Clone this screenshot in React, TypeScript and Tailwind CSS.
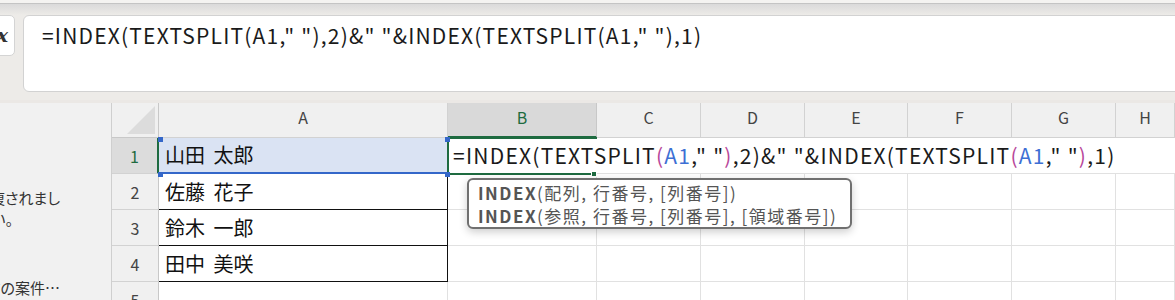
import React from "react";

const font = { fontFamily: '"Noto Sans CJK JP", "Noto Sans", sans-serif' };

const cols = ["A", "B", "C", "D", "E", "F", "G", "H"];
const names = ["山田 太郎", "佐藤 花子", "鈴木 一郎", "田中 美咲", ""];

function Formula({ colored }: { colored?: boolean }) {
  const ref = colored ? "text-[#3d6fd4]" : "";
  const par = colored ? "text-[#b8479a]" : "";
  const part = (n: string) => (
    <>
      INDEX(TEXTSPLIT<span className={par}>(</span>
      <span className={ref}>A1</span>," "<span className={par}>)</span>,{n})
    </>
  );
  return (
    <>
      ={part("2")}&amp;" "&amp;{part("1")}
    </>
  );
}

export default function App() {
  return (
    <div
      className="w-[1175px] h-[300px] overflow-hidden bg-[#edebe8] text-[#222]"
      style={font}
    >
      {/* formula bar */}
      <div className="h-[100px] flex flex-col">
        <div className="h-[3px] bg-[#f4f3f1]" />
        <div className="h-[1px] bg-[#c4c4c4]" />
        <div className="h-[11px] bg-gradient-to-b from-[#dadada] to-[#edebe8]" />
        <div className="flex gap-[8px]">
          <div className="-ml-[30px] w-[45px] h-[41px] bg-white border border-[#d4d4d4] rounded-[5px] flex items-center justify-end pr-[6px]">
            <span className="italic font-bold text-[19px] text-[#333]" style={{ fontFamily: '"DejaVu Serif", serif' }}>
              x
            </span>
          </div>
          <div className="flex-1 -mr-[20px] h-[77px] bg-white border border-[#d2d2d2] rounded-[6px] pl-[18px] pt-[5px]">
            <div className="text-[21px] leading-[28px] tracking-[1.2px] whitespace-nowrap text-[#1a1a1a]">
              <Formula />
            </div>
          </div>
        </div>
      </div>

      <div className="h-[3px] bg-[#ebe8e5]" />

      {/* sheet area */}
      <div className="flex h-[197px]">
        <div
          className="w-[111px] bg-[#f1f1f1] flex flex-col text-[15px] leading-[21px] text-[#333] pr-[51px] pt-[84px] overflow-hidden"
          style={{ fontFeatureSettings: '"palt"' }}
        >
          <div className="flex justify-end whitespace-nowrap">修復されまし</div>
          <div className="flex justify-end whitespace-nowrap mr-[47px]">ください。</div>
          <div className="flex justify-end whitespace-nowrap mt-[48px]">前の案件…</div>
        </div>

        <div className="relative flex-1 border-l border-[#cfcfcf] bg-white overflow-hidden">
          <div className="grid grid-cols-[47px_289px_149px_104px_104px_103px_104px_104px_1fr] grid-rows-[35px_36px_36px_36px_36px_36px]">
            {/* header row */}
            <div className="bg-[#f0f0f0] border-b border-r border-[#c8c8c8] relative">
              <div
                className="absolute right-[3px] bottom-[3px] w-[28px] h-[28px] bg-[#dcdcdc]"
                style={{ clipPath: "polygon(100% 0, 100% 100%, 0 100%)" }}
              />
            </div>
            {cols.map((c) => (
              <div
                key={c}
                className={
                  c === "B"
                    ? "bg-[#d9d9d9] border-b-[2px] border-b-[#1e6b40] border-r border-r-[#c8c8c8] flex justify-center pt-[2px] text-[16px] leading-[24px] text-[#1e6b40]"
                    : "bg-[#f0f0f0] border-b border-r border-[#d2d2d2] flex justify-center pt-[2px] text-[16px] leading-[24px] text-[#444]"
                }
              >
                {c}
              </div>
            ))}

            {names.map((n, i) => {
              const r = i + 1;
              const black = i < 4;
              return (
                <React.Fragment key={r}>
                  <div
                    className={
                      r === 1
                        ? "bg-[#dcdcdc] border-r-[2px] border-r-[#1e6b40] border-b border-b-[#d2d2d2] flex items-center justify-center text-[16px] text-[#1e6b40]"
                        : "bg-[#f0f0f0] border-r border-[#c8c8c8] border-b border-b-[#d2d2d2] flex items-center justify-center text-[16px] text-[#444]"
                    }
                  >
                    {r}
                  </div>
                  <div
                    className={
                      (r === 1
                        ? "bg-[#dae3f3] border-b-[2px] border-b-[#3467c9] border-r border-r-[#222]"
                        : black
                        ? "border-b border-r border-[#111]"
                        : "border-r border-b border-[#e1e1e1]") +
                      " flex items-center pl-[6px] text-[20px] [word-spacing:4px] whitespace-nowrap text-[#111]"
                    }
                  >
                    {n}
                  </div>
                  {cols.slice(1).map((c) => (
                    <div
                      key={c}
                      className={
                        r === 1
                          ? "border-b border-[#e1e1e1] relative"
                          : "border-r border-b border-[#e1e1e1]"
                      }
                    >
                      {r === 1 && c === "B" && (
                        <div className="absolute left-[5px] top-0 h-full flex items-center text-[21px] tracking-[1.24px] whitespace-nowrap text-[#1a1a1a] z-10">
                          <Formula colored />
                        </div>
                      )}
                    </div>
                  ))}
                </React.Fragment>
              );
            })}
          </div>

          {/* B1 edit border */}
          <div className="absolute left-[335px] top-[34px] w-[150px] h-[38px] border-[2px] border-r-0 border-[#1e6b40] pointer-events-none" />
          <div className="absolute left-[479px] top-[68px] w-[6px] h-[6px] bg-[#1e6b40] border border-white" />
          {/* A1 reference handles */}
          <div className="absolute left-[46px] top-[34px] w-[5px] h-[5px] bg-[#3467c9]" />
          <div className="absolute left-[333px] top-[34px] w-[5px] h-[5px] bg-[#3467c9]" />
          <div className="absolute left-[46px] top-[69px] w-[5px] h-[5px] bg-[#3467c9]" />
          <div className="absolute left-[333px] top-[69px] w-[5px] h-[5px] bg-[#3467c9]" />

          {/* tooltip */}
          <div className="absolute left-[355px] top-[75px] w-[385px] h-[51px] bg-white border-[2px] border-[#707070] rounded-[6px] shadow-[0_3px_8px_rgba(0,0,0,0.2)] pl-[9px] pt-[1px] text-[17px] leading-[23px] tracking-[1.5px] text-[#555] z-20">
            <div className="whitespace-nowrap">
              <span className="font-bold">INDEX</span>(配列, 行番号, [列番号])
            </div>
            <div className="whitespace-nowrap">
              <span className="font-bold">INDEX</span>(参照, 行番号, [列番号], [領域番号])
            </div>
          </div>
        </div>
      </div>
    </div>
  );
}
